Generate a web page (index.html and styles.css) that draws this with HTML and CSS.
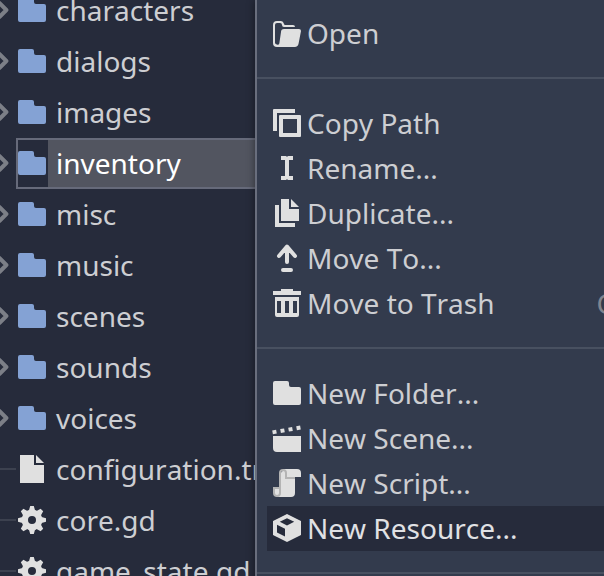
FILE: index.html
```
<!DOCTYPE html>
<html lang="en">
<head>
<meta charset="utf-8">
<title>FileSystem</title>
<link rel="stylesheet" href="styles.css">
</head>
<body>
<svg class="defs" width="0" height="0" aria-hidden="true">
  <defs>
    <symbol id="folder" viewBox="0 0 16 16"><path d="M2 2a1 1 0 0 0-1 1v10a1 1 0 0 0 1 1h12a1 1 0 0 0 1-1V6a1 1 0 0 0-1-1h-4a1 1 0 0 1-1-1V3a1 1 0 0 0-1-1z"/></symbol>
    <symbol id="file" viewBox="0 0 16 16"><path d="M2 1v14h12V6H9V1zM10 1v4h4z"/></symbol>
    <symbol id="gear" viewBox="0 0 16 16">
      <circle cx="8" cy="8" r="3.6" fill="none" stroke="currentColor" stroke-width="3.200"/>
      <path id="teeth" d="M7.100 1h1.800L9.900 4.500H6.100zM7.100 15h1.800l1-3.500H6.100zM1 7.100v1.800l3.500 1V6.100zM15 7.100v1.800l-3.500 1V6.100z"/>
      <use href="#teeth" transform="rotate(45 8 8)"/>
    </symbol>
    <symbol id="arrow" viewBox="0 0 16 16"><path d="M6.200 4.500L9.700 8l-3.500 3.500" fill="none" stroke="currentColor" stroke-width="2" stroke-linecap="round" stroke-linejoin="round"/></symbol>
    <symbol id="open" viewBox="0 0 16 16"><path d="M3 2a2 2 0 0 0-2 2v9a2 2 0 0 0 2 2h8.800a2 2 0 0 0 2-1.700L15 7a1 1 0 0 0-1-1H6.500a1.500 1.500 0 0 0-1.500 1.500L4.200 13a.8.8 0 0 1-1.200.7A1 1 0 0 1 2 13V4a1 1 0 0 1 1-1h1.500a1 1 0 0 1 1 1 1 1 0 0 0 1 1H12a1 1 0 0 0-1-1H7a1 1 0 0 1-.6-.8A1.500 1.500 0 0 0 5 2z"/></symbol>
    <symbol id="copy" viewBox="0 0 16 16"><path fill-rule="evenodd" d="M1.500 1a.5.5 0 0 0-.5.500V12h2V3h9V1zM4.500 4a.5.5 0 0 0-.5.500v10a.5.5 0 0 0 .5.500h10a.5.5 0 0 0 .5-.500v-10a.5.5 0 0 0-.5-.500zM6 6h7v7H6z"/></symbol>
    <symbol id="rename" viewBox="0 0 16 16"><path d="M5 2v2h2v8H5v2h2.400l.6-.4.6.4H11v-2H9V4h2V2H8.600L8 2.400 7.400 2z"/></symbol>
    <symbol id="duplicate" viewBox="0 0 16 16"><path d="M5 1v11h9V6H9V1zM10 1v4h4zM2 4v11h10v-2H4V4z"/></symbol>
    <symbol id="move" viewBox="0 0 16 16"><path d="M8 10V2.400M4 7l4-4.700L12 7M6 14h4" fill="none" stroke="currentColor" stroke-width="2" stroke-linecap="round" stroke-linejoin="round"/></symbol>
    <symbol id="trash" viewBox="0 0 16 16"><path fill-rule="evenodd" d="M5 1v1H1v2h14V2h-4V1zM2 5v9a1 1 0 0 0 1 1h10a1 1 0 0 0 1-1V5zM3 7h2v6H3zM7 7h2v6H7zM11 7h2v6h-2z"/></symbol>
    <symbol id="scene" viewBox="0 0 16 16"><path d="M1 7v6a2 2 0 0 0 2 2h12V7zM.6 4.200l1.950-.35.35 1.950-1.950.35zM4.600 3.550l1.950-.35.35 1.950-1.950.35zM8.600 2.850l1.950-.35.35 1.950-1.950.35zM12.600 2.150l1.950-.35.35 1.950-1.950.35z"/></symbol>
    <symbol id="script" viewBox="0 0 16 16"><path d="M6 1v1a1 1 0 0 0-1 1v10H4v-2H2v3l1 1h7a2 2 0 0 0 2-2V5h3V3a2 2 0 0 0-2-2z"/><path fill="#b4b4b4" fill-rule="evenodd" d="M6 1a2 2 0 0 0-2 2v7H1v3a2 2 0 0 0 4 0V3a1 1 0 0 1 2 0v3h5V5H8V3a2 2 0 0 0-2-2zM2 11h2v2a1 1 0 0 1-2 0z"/></symbol>
    <symbol id="resource" viewBox="0 0 16 16"><path fill-rule="evenodd" d="M8 1L1 4.500v7L8 15l7-3.500v-7zM8 3.100l3.600 1.800L8 6.700 4.400 4.900zM3 6.400l4 2v3.900l-4-2z"/></symbol>
  </defs>
</svg>
<div class="app">
  <ul class="tree">
    <li class="row dir"><svg class="fold"><use href="#arrow"/></svg><svg class="icon"><use href="#folder"/></svg><span>characters</span></li>
    <li class="row dir"><svg class="fold"><use href="#arrow"/></svg><svg class="icon"><use href="#folder"/></svg><span>dialogs</span></li>
    <li class="row dir"><svg class="fold"><use href="#arrow"/></svg><svg class="icon"><use href="#folder"/></svg><span>images</span></li>
    <li class="row dir selected"><svg class="fold"><use href="#arrow"/></svg><svg class="icon"><use href="#folder"/></svg><span>inventory</span></li>
    <li class="row dir"><svg class="fold"><use href="#arrow"/></svg><svg class="icon"><use href="#folder"/></svg><span>misc</span></li>
    <li class="row dir"><svg class="fold"><use href="#arrow"/></svg><svg class="icon"><use href="#folder"/></svg><span>music</span></li>
    <li class="row dir"><svg class="fold"><use href="#arrow"/></svg><svg class="icon"><use href="#folder"/></svg><span>scenes</span></li>
    <li class="row dir"><svg class="fold"><use href="#arrow"/></svg><svg class="icon"><use href="#folder"/></svg><span>sounds</span></li>
    <li class="row dir"><svg class="fold"><use href="#arrow"/></svg><svg class="icon"><use href="#folder"/></svg><span>voices</span></li>
    <li class="row"><i class="line"></i><svg class="icon"><use href="#file"/></svg><span>configuration.tres</span></li>
    <li class="row"><i class="line"></i><svg class="icon"><use href="#gear"/></svg><span>core.gd</span></li>
    <li class="row"><i class="line"></i><svg class="icon"><use href="#gear"/></svg><span>game_state.gd</span></li>
  </ul>
  <div class="menu">
    <div class="item"><svg class="icon"><use href="#open"/></svg><span>Open</span></div>
    <div class="sep"></div>
    <div class="item"><svg class="icon"><use href="#copy"/></svg><span>Copy Path</span></div>
    <div class="item"><svg class="icon"><use href="#rename"/></svg><span>Rename...</span></div>
    <div class="item"><svg class="icon"><use href="#duplicate"/></svg><span>Duplicate...</span></div>
    <div class="item"><svg class="icon"><use href="#move"/></svg><span>Move To...</span></div>
    <div class="item"><svg class="icon"><use href="#trash"/></svg><span>Move to Trash</span><kbd>C</kbd></div>
    <div class="sep"></div>
    <div class="item"><svg class="icon"><use href="#folder"/></svg><span>New Folder...</span></div>
    <div class="item"><svg class="icon"><use href="#scene"/></svg><span>New Scene...</span></div>
    <div class="item"><svg class="icon"><use href="#script"/></svg><span>New Script...</span></div>
    <div class="item hover"><svg class="icon"><use href="#resource"/></svg><span>New Resource...</span></div>
    <div class="sep"></div>
  </div>
</div>
</body>
</html>
```
FILE: styles.css
```
* { box-sizing: border-box; }
body {
  margin: 0;
  overflow: hidden;
  background: #262b3b;
  color: #cdced2;
  font: 28px/38px "Noto Sans", sans-serif;
  font-kerning: none;
}
.defs { display: block; }
.app {
  display: grid;
  grid-template-columns: 255px 349px;
  height: 576px;
  overflow: hidden;
}
.tree {
  list-style: none;
  margin: -15px 0 0;
  padding: 0;
  min-width: 0;
  overflow: hidden;
}
.row {
  display: flex;
  align-items: center;
  height: 51px;
  white-space: nowrap;
}
.row .icon { margin-right: 8px; }
.icon {
  width: 32px;
  height: 32px;
  flex: none;
  margin-top: -1px;
  fill: #e0e0e0;
  color: #e0e0e0;
}
.row span,
.item span,
kbd { margin-bottom: 2px; }
.dir .icon { fill: #84a2d4; }
.fold {
  width: 32px;
  height: 32px;
  flex: none;
  margin: -1px -3px 0 -13px;
  color: #7c7f87;
}
.line {
  width: 16px;
  height: 2px;
  flex: none;
  background: #3c414f;
  margin-top: -1px;
}
.selected {
  color: #fff;
  background:
    linear-gradient(#666a7a, #666a7a) 16px 0 / 100% 2px no-repeat,
    linear-gradient(#666a7a, #666a7a) 16px 100% / 100% 2px no-repeat,
    linear-gradient(#666a7a, #666a7a) 16px 0 / 2px 100% no-repeat,
    linear-gradient(#525560, #525560) 48px 0 / 100% 100% no-repeat;
}
.menu {
  position: relative;
  padding-top: 11px;
  background: #333b4d;
  border-left: 2px solid #696e7d;
  box-shadow: 0 0 8px rgba(0, 0, 0, .45);
}
.item {
  display: flex;
  align-items: center;
  height: 45px;
  margin-left: 10px;
  padding-left: 4px;
  white-space: nowrap;
  overflow: hidden;
}
.item .icon { margin-right: 4px; }
.hover { background: #262b3b; color: #e0e1e4; }
.sep {
  height: 45px;
  padding-top: 21px;
}
.sep::before {
  content: "";
  display: block;
  height: 2px;
  background: #485060;
}
kbd {
  font: inherit;
  color: #81858f;
  margin-left: 102px;
}
```
